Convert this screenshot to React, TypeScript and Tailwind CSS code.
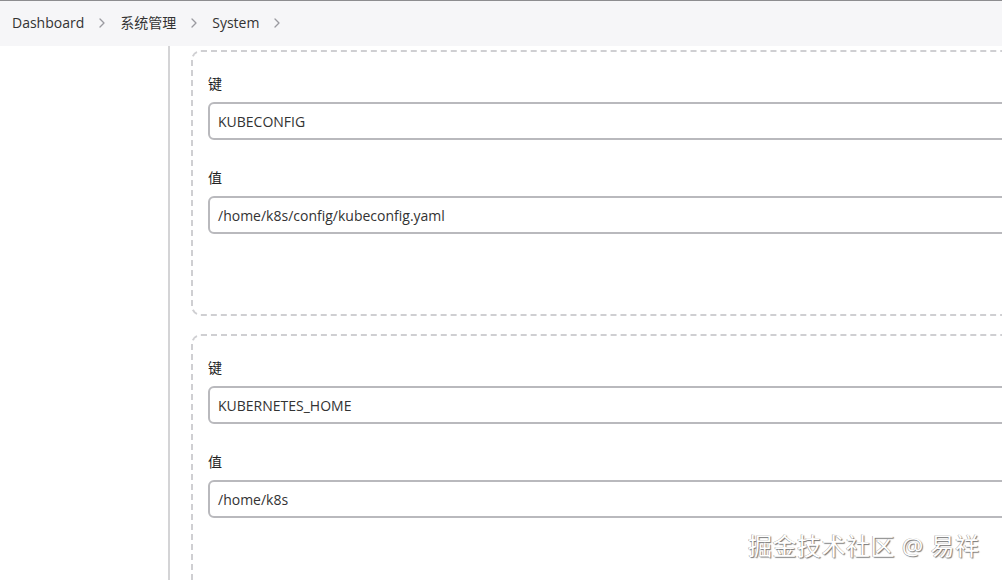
import React from 'react';

interface EnvVar {
  name: string;
  value: string;
}

const envVars: EnvVar[] = [
  { name: 'KUBECONFIG', value: '/home/k8s/config/kubeconfig.yaml' },
  { name: 'KUBERNETES_HOME', value: '/home/k8s' },
];

const crumbs = ['Dashboard', '系统管理', 'System'];

const Chevron = () => (
  <svg width="10" height="14" viewBox="0 0 10 14" className="text-[#9a9aa0]">
    <path d="M3 3l4 4-4 4" fill="none" stroke="currentColor" strokeWidth="1.3" strokeLinecap="round" strokeLinejoin="round" />
  </svg>
);

const Field: React.FC<{ label: string; value: string; first?: boolean }> = ({ label, value, first }) => (
  <div className={first ? '' : 'mt-[28px]'}>
    <div className="h-[20px] text-[14px] leading-[20px] text-[#222]">{label}</div>
    <div className="mt-[8px] h-[38px] rounded-[6px] border-2 border-[#b9b9bd] bg-white pl-[8px] flex items-center text-[14px] text-[#333]">
      {value}
    </div>
  </div>
);

const EnvCard: React.FC<{ item: EnvVar }> = ({ item }) => (
  <div className="w-[830px] rounded-[10px] border-2 border-dashed border-[#cfcfd2] pt-[22px] pl-[15px] pb-[80px]">
    <Field label="键" value={item.name} first />
    <Field label="值" value={item.value} />
  </div>
);

export default function App() {
  return (
    <div
      className="relative w-[1002px] h-[580px] overflow-hidden bg-white"
      style={{ fontFamily: '"Open Sans", "Noto Sans CJK SC", sans-serif' }}
    >
      {/* breadcrumb bar */}
      <header className="h-[46px] bg-[#f6f6f8] border-t border-[#8d8d90] flex items-center pl-[12px] pb-[2px] gap-[13px] text-[14px] text-[#333]">
        {crumbs.map((c) => (
          <React.Fragment key={c}>
            <span>{c}</span>
            <Chevron />
          </React.Fragment>
        ))}
      </header>

      <div className="flex h-[534px]">
        <aside className="w-[170px] shrink-0 border-r-2 border-[#d4d4d6]" />
        <main className="pl-[21px] pt-[4px] flex flex-col gap-[18px]">
          {envVars.map((v) => (
            <EnvCard key={v.name} item={v} />
          ))}
        </main>
      </div>

      <div
        className="absolute left-[748px] top-[531px] text-[24px] leading-[30px] text-white tracking-[0.5px]"
        style={{ textShadow: '1px 1px 1px #777, -0.5px -0.5px 0 #999' }}
      >
        掘金技术社区 @ 易祥
      </div>
    </div>
  );
}
